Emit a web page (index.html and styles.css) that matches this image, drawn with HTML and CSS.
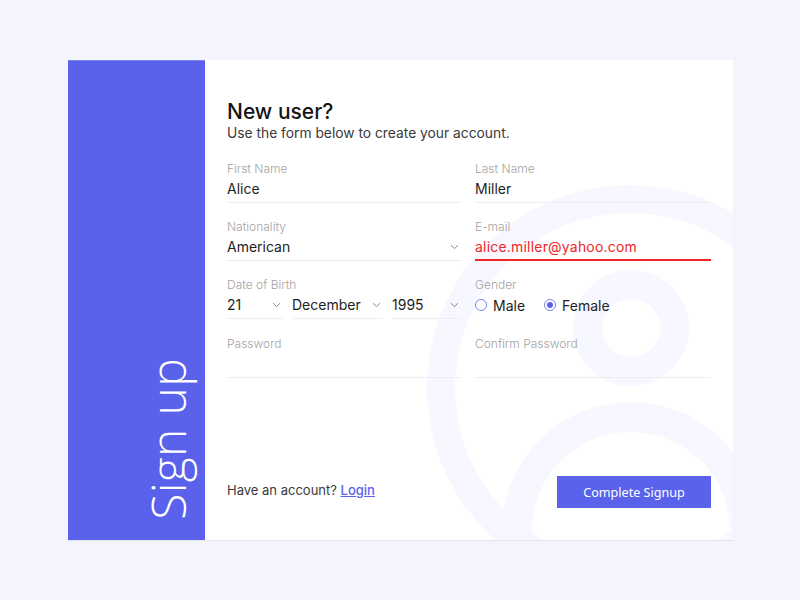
FILE: index.html
```html
<!DOCTYPE html>
<html>
<head>
<meta charset="utf-8">
<link rel="stylesheet" href="styles.css">
</head>
<body>
<div class="card">
  <aside class="side">
    <div class="side-title">Sign up</div>
  </aside>
  <main class="panel">
    <svg class="deco" width="528" height="480" viewBox="0 0 528 480">
      <circle cx="425" cy="328" r="189" fill="none" stroke="#f7f8ff" stroke-width="28"/>
      <circle cx="426" cy="268" r="43.5" fill="none" stroke="#f7f8ff" stroke-width="29"/>
      <circle cx="426" cy="471" r="114" fill="none" stroke="#f7f8ff" stroke-width="30"/>
    </svg>
    <div class="content">
      <h1 class="title">New user?</h1>
      <p class="subtitle">Use the form below to create your account.</p>
      <div class="grid">
        <div class="field">
          <div class="label">First Name</div>
          <div class="value">Alice</div>
        </div>
        <div class="field">
          <div class="label">Last Name</div>
          <div class="value">Miller</div>
        </div>
        <div class="field">
          <div class="label">Nationality</div>
          <div class="value select">American<svg class="chev" width="9" height="6" viewBox="0 0 9 6"><path d="M1 1.2 4.5 4.6 8 1.2" fill="none" stroke="#777" stroke-width="0.9"/></svg></div>
        </div>
        <div class="field">
          <div class="label">E-mail</div>
          <div class="value error">alice.miller@yahoo.com</div>
        </div>
        <div class="field">
          <div class="label">Date of Birth</div>
          <div class="dob">
            <div class="value select">21<svg class="chev" width="9" height="6" viewBox="0 0 9 6"><path d="M1 1.2 4.5 4.6 8 1.2" fill="none" stroke="#777" stroke-width="0.9"/></svg></div>
            <div class="value select">December<svg class="chev" width="9" height="6" viewBox="0 0 9 6"><path d="M1 1.2 4.5 4.6 8 1.2" fill="none" stroke="#777" stroke-width="0.9"/></svg></div>
            <div class="value select">1995<svg class="chev" width="9" height="6" viewBox="0 0 9 6"><path d="M1 1.2 4.5 4.6 8 1.2" fill="none" stroke="#777" stroke-width="0.9"/></svg></div>
          </div>
        </div>
        <div class="field">
          <div class="label">Gender</div>
          <div class="radios">
            <span class="radio"><span class="dot"></span>Male</span>
            <span class="radio checked"><span class="dot"></span>Female</span>
          </div>
        </div>
        <div class="field pw">
          <div class="label">Password</div>
          <div class="value"></div>
        </div>
        <div class="field pw">
          <div class="label">Confirm Password</div>
          <div class="value"></div>
        </div>
      </div>
      <div class="footer">
        <div class="have">Have an account? <a class="login" href="#">Login</a></div>
        <button class="btn">Complete Signup</button>
      </div>
    </div>
  </main>
</div>
</body>
</html>
```
FILE: styles.css
```css
html, body {
  margin: 0;
  padding: 0;
}
body {
  background: #f3f4fc;
  width: 800px;
  height: 600px;
  font-family: "Inter", "Liberation Sans", sans-serif;
  color: #1e1e1e;
  padding-top: 60px;
  box-sizing: border-box;
}
.card {
  margin-left: 68px;
  width: 665px;
  height: 480px;
  display: flex;
  box-shadow: 0 1px 0 #e4e5ee;
}
.side {
  width: 137px;
  flex: none;
  background: #5a62ec;
  box-shadow: inset 0 1px 0 #7c83f0;
  display: flex;
  align-items: flex-end;
  justify-content: flex-end;
  padding: 0 11px 20px 0;
  box-sizing: border-box;
}
.side-title {
  writing-mode: vertical-rl;
  transform: rotate(180deg);
  color: #fff;
  font-family: "Open Sans", sans-serif;
  font-weight: 300;
  font-size: 48px;
  line-height: 52px;
  letter-spacing: 0.3px;
}
.panel {
  flex: 1;
  background: #fff;
  position: relative;
  overflow: hidden;
}
.deco {
  position: absolute;
  left: 0;
  top: 0;
}
.content {
  position: relative;
  height: 100%;
  box-sizing: border-box;
  padding: 40px 22px 32px 22px;
  display: flex;
  flex-direction: column;
}
.title {
  margin: 0;
  font-size: 21px;
  font-weight: 500;
  line-height: 24px;
  color: #151515;
}
.subtitle {
  margin: 0 0 19px 0;
  font-size: 13.8px;
  line-height: 18px;
  color: #3a3a3a;
}
.grid {
  display: grid;
  grid-template-columns: 234px 236px;
  column-gap: 14px;
  row-gap: 16px;
}
.field.pw {
  margin-top: 1px;
}
.label {
  font-size: 12px;
  line-height: 16px;
  color: #a3a3a3;
  font-weight: 300;
}
.value {
  margin-top: 1px;
  height: 22px;
  line-height: 22px;
  padding-bottom: 2px;
  font-size: 14px;
  color: #1e1e1e;
  border-bottom: 1px solid #eeeef2;
}
.value.select {
  display: flex;
  align-items: center;
  justify-content: space-between;
}
.chev {
  margin-right: 2px;
}
.value.error {
  color: #f0262a;
  border-bottom: 2px solid #f0262a;
  padding-bottom: 1px;
  letter-spacing: 0.2px;
}
.dob {
  display: grid;
  grid-template-columns: 56px 91px 69px;
  column-gap: 9px;
}
.radios {
  margin-top: 1px;
  height: 22px;
  display: flex;
  align-items: center;
  gap: 19px;
  font-size: 14px;
}
.radio {
  display: flex;
  align-items: center;
  gap: 6px;
}
.dot {
  width: 10px;
  height: 10px;
  border: 1.2px solid #7c82f2;
  border-radius: 50%;
  display: flex;
  align-items: center;
  justify-content: center;
}
.radio.checked .dot::after {
  content: "";
  width: 6px;
  height: 6px;
  border-radius: 50%;
  background: #5a62ec;
}
.footer {
  margin-top: auto;
  display: flex;
  justify-content: space-between;
  align-items: center;
}
.have {
  font-size: 13px;
  color: #3a3a3a;
  margin-top: -4px;
}
.login {
  color: #5a62ec;
  font-weight: 500;
}
.btn {
  width: 154px;
  height: 32px;
  border: none;
  background: #5a62ec;
  color: #fff;
  font-family: "Noto Sans", sans-serif;
  font-size: 12.6px;
  padding: 0;
}
```
